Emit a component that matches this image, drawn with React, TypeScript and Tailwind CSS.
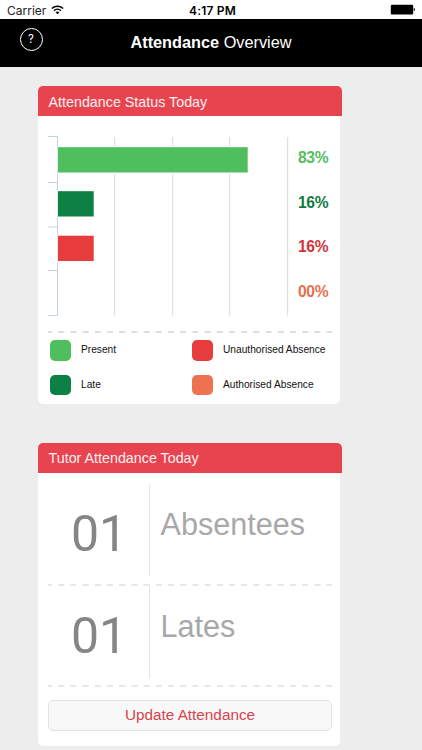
import type { ReactNode } from "react";

type Series = {
  label: string;
  value: string;
  width: number;
  y: number;
  color: string;
  textClass: string;
  swatchClass: string;
};

const series: Series[] = [
  { label: "Present", value: "83%", width: 190, y: 11, color: "#4fbf5e", textClass: "text-[#55bb62]", swatchClass: "bg-[#4fbf5e]" },
  { label: "Late", value: "16%", width: 36, y: 55, color: "#0d8043", textClass: "text-[#0f7a41]", swatchClass: "bg-[#0d8043]" },
  { label: "Unauthorised Absence", value: "16%", width: 36, y: 99.5, color: "#e63c3c", textClass: "text-[#d53238]", swatchClass: "bg-[#e63c3c]" },
  { label: "Authorised Absence", value: "00%", width: 0, y: 144, color: "#ee7150", textClass: "text-[#e3714f]", swatchClass: "bg-[#ee7150]" },
];

const legend = [series[0], series[2], series[1], series[3]];

function StatusBar() {
  return (
    <div className="flex h-[18.5px] items-center justify-between bg-white pt-[3px] pr-[6px] pl-[7px] font-['Inter',sans-serif] leading-none text-black">
      <div className="flex w-[120px] items-center gap-[5px]">
        <span className="text-[12px] text-[#222]">Carrier</span>
        <svg width="13" height="10" viewBox="0 0 13 10" fill="none" stroke="#000" className="-mt-[2px]">
          <path d="M0.9 3.5a8.2 8.2 0 0 1 11.2 0" strokeWidth="1.6" />
          <path d="M3 5.7a5 5 0 0 1 7 0" strokeWidth="1.5" />
          <path d="M6.5 9.2 4.6 7.3a2.8 2.8 0 0 1 3.8 0Z" fill="#000" stroke="none" />
        </svg>
      </div>
      <span className="pl-[2px] text-[12px] font-semibold tracking-[0.2px]">4:17 PM</span>
      <div className="flex w-[120px] justify-end">
        <svg width="26" height="11" viewBox="0 0 26 11" className="-mt-[2px]">
          <rect x="0.8" y="0.8" width="22.4" height="9.6" rx="1.2" />
          <path d="M23.8 4v3.2c1.6-.3 1.6-2.9 0-3.2Z" />
        </svg>
      </div>
    </div>
  );
}

function Header() {
  return (
    <header className="relative flex h-[48px] items-center justify-center bg-black text-white">
      <button
        aria-label="Help"
        className="absolute top-[9px] left-[19.5px] flex h-[23px] w-[23px] items-center justify-center rounded-full border-[1.5px] border-white pt-px font-['Inter',sans-serif] text-[11.5px] leading-none"
      >
        ?
      </button>
      <h1 className="text-[16.3px] leading-none">
        <span className="font-bold">Attendance</span> Overview
      </h1>
    </header>
  );
}

function Divider({ light }: { light?: boolean }) {
  return (
    <svg width="284" height="2" viewBox="0 0 284 2" className="block">
      <path d="M0 1H284" stroke={light ? "#e7e7e7" : "#dedede"} strokeWidth="1.8" strokeDasharray="6 6.2" strokeDashoffset="2" />
    </svg>
  );
}

function Card({ title, children }: { title: string; children: ReactNode }) {
  return (
    <section className="w-[304px]">
      <h2 className="flex h-[30px] items-center rounded-t-[5px] bg-[#e84450] pt-[2px] pl-[10.5px] text-[14.3px] leading-none text-[#fff0f0]">
        {title}
      </h2>
      <div className="w-[302px] rounded-b-[5px] bg-white px-[10px]">{children}</div>
    </section>
  );
}

function Chart() {
  return (
    <svg width="242" height="181" viewBox="0 0 242 181" className="block">
      <g fill="#dfdfdf">
        {[66, 124, 181, 239].map((x) => (
          <rect key={x} x={x} y="1" width="1.2" height="178.5" />
        ))}
      </g>
      <path d="M0 .5H9.5V179.5H0M0 46.5H9.5M0 91H9.5M0 134.5H9.5" fill="none" stroke="#c3d2e2" />
      {series
        .filter((s) => s.width > 0)
        .map((s) => (
          <rect key={s.label} x="9.5" y={s.y - 1} width={s.width + 1.5} height="28" fill="#fff" />
        ))}
      {series
        .filter((s) => s.width > 0)
        .map((s) => (
          <rect key={s.label} x="10" y={s.y + 0.2} width={s.width - 0.3} height="25.3" fill={s.color} />
        ))}
    </svg>
  );
}

function CountRow({ count, label }: { count: string; label: string }) {
  return (
    <div className="flex h-[92px]">
      <div className="flex w-[102px] items-center justify-center border-r border-[#e6e6e6] pt-[9px] pl-px font-['Roboto',sans-serif] text-[50px] leading-none text-[#858585]">
        {count}
      </div>
      <div className="pt-[24px] pl-[10.5px] text-[30.6px] leading-[32px] text-[#a8a8a8]">{label}</div>
    </div>
  );
}

export default function App() {
  return (
    <div className="h-[750px] w-[422px] overflow-hidden bg-[#ededed] font-['Liberation_Sans',Arial,sans-serif]">
      <StatusBar />
      <Header />
      <main className="flex flex-col gap-[38.5px] pt-[19.5px] pl-[38px]">
        <Card title="Attendance Status Today">
          <div className="flex h-[215px] justify-between pt-[20px]">
            <Chart />
            <div className="w-[32px] pt-px text-[15.6px] font-bold tracking-[-0.35px]">
              {series.map((s) => (
                <div key={s.label} className={`h-[44.5px] pt-[11px] leading-[20px] ${s.textClass}`}>
                  {s.value}
                </div>
              ))}
            </div>
          </div>
          <Divider />
          <div className="grid h-[71px] grid-cols-[142px_1fr] content-start gap-y-[14px] pt-[7px] pl-[2px]">
            {legend.map((s) => (
              <div key={s.label} className="flex items-center gap-[10.5px]">
                <span className={`h-[20.5px] w-[20.5px] rounded-[5px] ${s.swatchClass}`} />
                <span className="text-[10.2px] leading-none whitespace-nowrap text-[#111]">{s.label}</span>
              </div>
            ))}
          </div>
        </Card>
        <Card title="Tutor Attendance Today">
          <div className="pt-[11px] pb-[8px]">
            <CountRow count="01" label="Absentees" />
          </div>
          <Divider light />
          <div className="pb-[7.5px]">
            <CountRow count="01" label="Lates" />
          </div>
          <Divider light />
          <div className="pt-[13px] pb-[15px]">
            <button className="block h-[31px] w-[284px] rounded-[5px] border border-[#e3e3e3] bg-[#f8f8f8] pb-[2px] text-[15.3px] leading-none text-[#d6434d]">
              Update Attendance
            </button>
          </div>
        </Card>
      </main>
    </div>
  );
}
